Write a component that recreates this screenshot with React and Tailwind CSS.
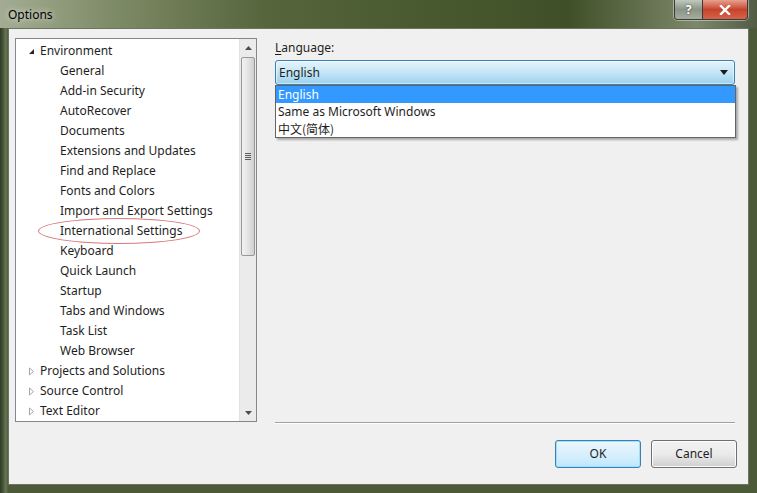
import React from 'react';

const children = [
  'General',
  'Add-in Security',
  'AutoRecover',
  'Documents',
  'Extensions and Updates',
  'Find and Replace',
  'Fonts and Colors',
  'Import and Export Settings',
  'International Settings',
  'Keyboard',
  'Quick Launch',
  'Startup',
  'Tabs and Windows',
  'Task List',
  'Web Browser',
];

const collapsed = ['Projects and Solutions', 'Source Control', 'Text Editor'];

const ExpandedGlyph = () => (
  <svg width="7" height="7" viewBox="0 0 7 7" className="mr-[5px]">
    <path d="M6 1 L6 6 L1 6 Z" fill="#262626" />
  </svg>
);

const CollapsedGlyph = () => (
  <svg width="7" height="9" viewBox="0 0 7 9" className="mr-[5px]">
    <path d="M1.5 1 L5.5 4.5 L1.5 8 Z" fill="none" stroke="#a6a6a6" strokeWidth="1" />
  </svg>
);

const ScrollBar = () => (
  <div className="flex w-[17px] flex-col bg-[#ebebeb] border-l border-[#e2e2e2]">
    <div className="flex h-[17px] items-center justify-center">
      <svg width="7" height="4" viewBox="0 0 7 4">
        <path d="M0 4 L3.5 0 L7 4 Z" fill="#4d4d4d" />
      </svg>
    </div>
    <div className="mx-[1px] mt-[1px] flex h-[199px] items-center justify-center rounded-[2px] border border-[#979797] bg-gradient-to-r from-[#f2f2f2] via-[#e4e4e4] to-[#cfcfcf]">
      <div className="flex flex-col gap-[1px]">
        <div className="h-[1px] w-[6px] bg-[#5c5c5c]" />
        <div className="h-[1px] w-[6px] bg-[#5c5c5c]" />
        <div className="h-[1px] w-[6px] bg-[#5c5c5c]" />
        <div className="h-[1px] w-[6px] bg-[#5c5c5c]" />
      </div>
    </div>
    <div className="flex-1" />
    <div className="flex h-[17px] items-center justify-center">
      <svg width="7" height="4" viewBox="0 0 7 4">
        <path d="M0 0 L3.5 4 L7 0 Z" fill="#4d4d4d" />
      </svg>
    </div>
  </div>
);

const Tree = () => (
  <div className="flex h-[384px] w-[242px] border border-[#828790] bg-white">
    <div className="flex-1 overflow-hidden pt-[2px]">
      <div className="flex h-[20px] items-center pl-[12px]">
        <ExpandedGlyph />
        <span>Environment</span>
      </div>
      {children.map((c) => (
        <div key={c} className="relative flex h-[20px] items-center pl-[44px]">
          <span>{c}</span>
          {c === 'International Settings' && (
            <div className="absolute left-[22px] top-[-3px] h-[26px] w-[162px] rounded-[50%] border border-[#d9787a]" />
          )}
        </div>
      ))}
      {collapsed.map((c) => (
        <div key={c} className="flex h-[20px] items-center pl-[12px]">
          <CollapsedGlyph />
          <span>{c}</span>
        </div>
      ))}
    </div>
    <ScrollBar />
  </div>
);

const LanguagePanel = () => (
  <div className="relative ml-[18px] mt-[3px] flex w-[460px] flex-col">
    <div className="h-[19px] leading-[14px]">
      <span className="underline underline-offset-2">L</span>anguage:
    </div>
    <div className="flex h-[25px] items-center justify-between rounded-[3px] border border-[#3c7fb1] bg-gradient-to-b from-[#e5f4fc] via-[#c4e5f6] to-[#98d1ef] pl-[3px] pr-[6px] shadow-[inset_0_0_0_1px_rgba(255,255,255,0.5)]">
      <span>English</span>
      <svg width="8" height="5" viewBox="0 0 8 5">
        <path d="M0 0 L8 0 L4 5 Z" fill="#1a1a1a" />
      </svg>
    </div>
    <div className="absolute left-0 top-[44px] w-[461px] border border-[#646464] bg-white shadow-[2px_2px_2px_rgba(0,0,0,0.3)]">
      <div className="flex h-[17px] items-center bg-[#3399ff] pl-[2px] text-white">English</div>
      <div className="flex h-[17px] items-center pl-[2px]">Same as Microsoft Windows</div>
      <div className="flex h-[17px] items-center pl-[2px] font-['Noto_Sans_CJK_SC','Noto_Sans',sans-serif]">中文(简体)</div>
    </div>
  </div>
);

const TitleBar = () => (
  <div className="relative flex h-[30px] items-start bg-[linear-gradient(90deg,#a3ac93_0%,#7e8b67_15%,#56653c_35%,#4a5a30_55%,#3f5028_75%,#7d876a_92%,#525c45_100%)]">
    <span className="ml-[8px] mt-[6px] text-[12px] text-black [text-shadow:0_0_6px_rgba(255,255,255,0.9)]">Options</span>
    <div className="absolute right-[9px] top-0 flex h-[20px] overflow-hidden rounded-b-[4px] border border-t-0 border-[#3b3b3b] shadow-[0_0_0_1px_rgba(255,255,255,0.4)]">
      <div className="flex w-[28px] items-center justify-center border-r border-[#3b3b3b] bg-gradient-to-b from-[#c2c8bd] via-[#8b9486] to-[#a5ad9e] text-[12px] font-bold text-white [text-shadow:0_0_2px_#333]">
        ?
      </div>
      <div className="flex w-[44px] items-center justify-center bg-gradient-to-b from-[#e6a08f] via-[#c7432b] to-[#d6624a]">
        <svg width="12" height="10" viewBox="0 0 12 10">
          <path d="M2 1 L10 9 M10 1 L2 9" stroke="#ffffff" strokeWidth="2.4" strokeLinecap="square" />
        </svg>
      </div>
    </div>
  </div>
);

export default function App() {
  return (
    <div className="h-[493px] w-[757px] overflow-hidden bg-[#2c3820] font-['Noto_Sans',sans-serif] text-[12px] text-[#1e1e1e]">
      <div className="flex h-full flex-col rounded-t-[6px] bg-[#4b5a35]">
        <TitleBar />
        <div className="flex flex-1 bg-[linear-gradient(90deg,#2e3a22_0px,#47553a_3px,#6b7756_6px,#4c5a3a_8px)] px-[8px] pb-[8px]">
          <div className="flex flex-1 flex-col border border-[#6c7360] bg-[#f0f0f0]">
            <div className="flex flex-1 pl-[6px] pt-[9px]">
              <Tree />
              <LanguagePanel />
            </div>
            <div className="ml-[266px] mr-[13px] border-t border-[#a0a0a0] border-b border-b-white" />
            <div className="flex justify-end gap-[10px] pb-[16px] pr-[11px] pt-[16px]">
              <button className="h-[28px] w-[86px] rounded-[3px] border border-[#3c7fb1] bg-gradient-to-b from-[#eaf6fd] via-[#d9f0fc] to-[#bee6fd] shadow-[inset_0_0_0_1px_#9fe0ff]">
                OK
              </button>
              <button className="h-[28px] w-[86px] rounded-[3px] border border-[#707070] bg-gradient-to-b from-[#f2f2f2] via-[#ebebeb] to-[#cfcfcf] shadow-[inset_0_0_0_1px_#fcfcfc]">
                Cancel
              </button>
            </div>
          </div>
        </div>
      </div>
    </div>
  );
}
